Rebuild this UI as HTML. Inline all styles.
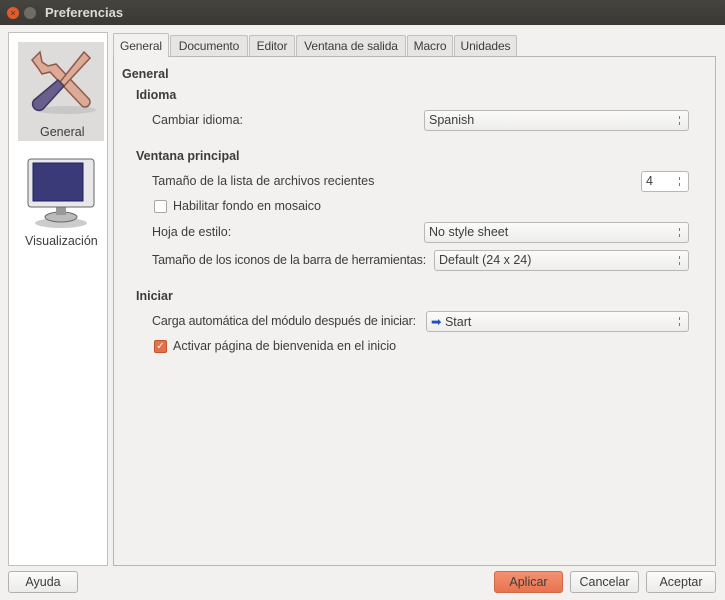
<!DOCTYPE html><html><head><style>
*{box-sizing:border-box;margin:0;padding:0}
body{width:725px;height:600px;background:#f2f1f0;font-family:"Liberation Sans",sans-serif;font-size:12.5px;color:#3c3c3c;position:relative;overflow:hidden}
.a{position:absolute;white-space:nowrap}
.b{font-weight:bold}
.combo{position:absolute;height:21px;border:1px solid #b9b7b3;border-radius:3px;background:linear-gradient(#fbfbfa,#eeedec);padding:2px 4px;white-space:nowrap}
.combo:after{content:"";position:absolute;right:6px;top:5px;width:5px;height:9px;background:linear-gradient(#777,#777) 2px 0/1px 3px no-repeat,linear-gradient(#777,#777) 2px 6px/1px 3px no-repeat}
.tab{position:absolute;top:35px;height:21px;border:1px solid #c2c0bc;border-bottom:none;background:#e6e5e3;padding-top:3px;text-align:center;border-radius:2px 2px 0 0;white-space:nowrap;font-size:12px;letter-spacing:-0.1px}
.btn{position:absolute;top:571px;height:22px;border:1px solid #b3b1ad;border-radius:3px;background:linear-gradient(#fbfbfa,#ecebea);text-align:center;padding-top:3px}
.cb{position:absolute;width:13px;height:13px;border:1px solid #a8a6a2;border-radius:2px;background:#fff}
</style></head><body>
<div class="a" style="left:0;top:0;width:725px;height:25px;background:linear-gradient(#45443f,#3a3935)"></div>
<div class="a" style="left:7px;top:7px;width:12px;height:12px;border-radius:50%;background:#e55a2b;color:#333;font-size:9px;text-align:center;line-height:12px">×</div>
<div class="a" style="left:24px;top:7px;width:12px;height:12px;border-radius:50%;background:#6d6c67"></div>
<div class="a b" style="left:45px;top:5px;color:#dfdbd2;font-size:13px">Preferencias</div>

<div class="a" style="left:8px;top:32px;width:100px;height:534px;background:#fff;border:1px solid #c2c0bc"></div>
<div class="a" style="left:18px;top:42px;width:86px;height:99px;background:#dddcda"></div>
<svg class="a" style="left:26px;top:46px" width="72" height="72" viewBox="0 0 72 72">
<ellipse cx="40" cy="64" rx="30" ry="4" fill="#c8c8c8"/>
<path d="M6 14 l8-8 l2 10 l6 4 l8-2 l32 34 a4 4 0 0 1 -6 8 l-32-34 l-8 2 l-4-6 z" fill="#ddaa98" stroke="#8c5a4c" stroke-width="1.5"/>
<path d="M58 6 l6 6 l-26 28 l-4-4 z" fill="#ddaa98" stroke="#8c5a4c" stroke-width="1.5"/>
<path d="M32 34 l6 6 l-20 22 a5 5 0 0 1 -10 -8 z" fill="#6a5f8c" stroke="#3f3760" stroke-width="1.5"/>
</svg>
<div class="a" style="left:40px;top:125px">General</div>
<svg class="a" style="left:26px;top:157px" width="70" height="72" viewBox="0 0 70 72">
<ellipse cx="35" cy="66" rx="26" ry="5" fill="#ccc"/>
<ellipse cx="35" cy="60" rx="16" ry="5" fill="#bbb" stroke="#666"/>
<rect x="30" y="50" width="10" height="8" fill="#999"/>
<rect x="2" y="2" width="66" height="48" rx="3" fill="#e8e8e8" stroke="#666"/>
<rect x="7" y="6" width="50" height="38" fill="#3b3a78" stroke="#1e1e66"/>
</svg>
<div class="a" style="left:25px;top:234px">Visualización</div>

<div class="a" style="left:113px;top:56px;width:603px;height:510px;border:1px solid #b8b6b2;background:#f2f1f0"></div>
<div class="tab" style="left:113px;top:33px;height:24px;width:56px;background:#f2f1f0;z-index:2;padding-top:5px">General</div>
<div class="tab" style="left:170px;width:78px">Documento</div>
<div class="tab" style="left:249px;width:46px">Editor</div>
<div class="tab" style="left:296px;width:110px">Ventana de salida</div>
<div class="tab" style="left:407px;width:46px">Macro</div>
<div class="tab" style="left:454px;width:63px">Unidades</div>

<div class="a b" style="left:122px;top:67px">General</div>
<div class="a b" style="left:136px;top:88px">Idioma</div>
<div class="a" style="left:152px;top:113px">Cambiar idioma:</div>
<div class="combo" style="left:424px;top:110px;width:265px">Spanish</div>
<div class="a b" style="left:136px;top:149px">Ventana principal</div>
<div class="a" style="left:152px;top:174px">Tamaño de la lista de archivos recientes</div>
<div class="combo" style="left:641px;top:171px;width:48px;background:#fff">4</div>
<div class="cb" style="left:154px;top:200px"></div>
<div class="a" style="left:173px;top:199px">Habilitar fondo en mosaico</div>
<div class="a" style="left:152px;top:225px">Hoja de estilo:</div>
<div class="combo" style="left:424px;top:222px;width:265px">No style sheet</div>
<div class="a" style="left:152px;top:253px;letter-spacing:-0.15px">Tamaño de los iconos de la barra de herramientas:</div>
<div class="combo" style="left:434px;top:250px;width:255px">Default (24 x 24)</div>
<div class="a b" style="left:136px;top:289px">Iniciar</div>
<div class="a" style="left:152px;top:314px;letter-spacing:-0.15px">Carga automática del módulo después de iniciar:</div>
<div class="combo" style="left:426px;top:311px;width:263px"><span style="color:#2050c0">➡</span> Start</div>
<div class="cb" style="left:154px;top:340px;background:#e2714a;border-color:#c0552f;color:#fff;font-size:10px;line-height:11px;text-align:center">✓</div>
<div class="a" style="left:173px;top:339px">Activar página de bienvenida en el inicio</div>

<div class="btn" style="left:8px;width:70px">Ayuda</div>
<div class="btn" style="left:494px;width:69px;background:linear-gradient(#f39271,#e8734e);border-color:#cf6a4a">Aplicar</div>
<div class="btn" style="left:570px;width:69px">Cancelar</div>
<div class="btn" style="left:646px;width:70px">Aceptar</div>
</body></html>
